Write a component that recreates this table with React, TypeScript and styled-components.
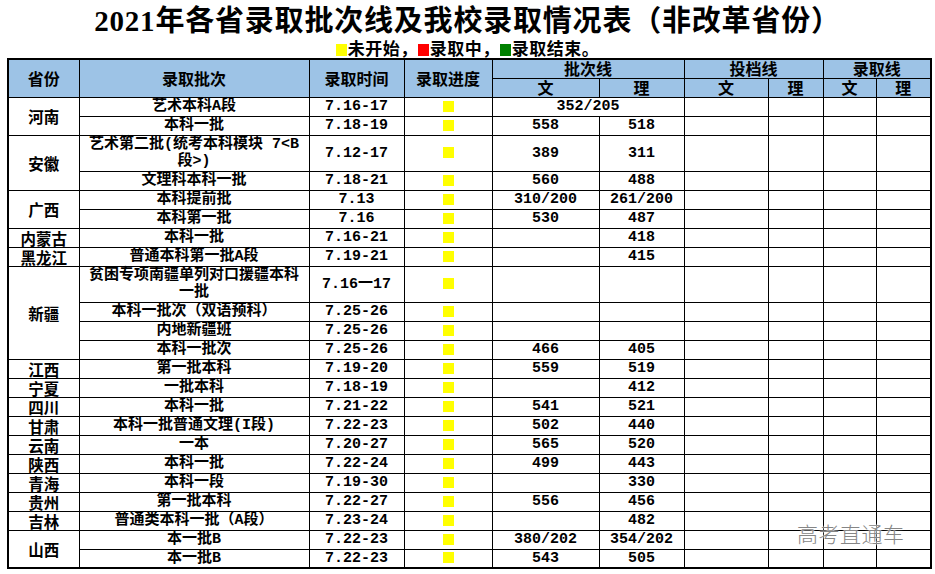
import React from 'react';
import styled, { createGlobalStyle } from 'styled-components';

const GlobalStyle = createGlobalStyle`
  html, body {
    margin: 0;
    padding: 0;
    background: #fff;
  }
  body {
    font-family: "Noto Sans CJK SC", sans-serif;
    color: #000;
  }
`

const Page = styled.div`
  position: relative;
  width: 935px;
  height: 574px;
  overflow: hidden;
  padding-top: 5px;
  box-sizing: border-box;
`

const Title = styled.h1`
  margin: 0;
  text-align: center;
  font-family: "Liberation Serif", "Noto Sans CJK SC", serif;
  font-size: 29px;
  line-height: 33px;
  font-weight: 700;
  letter-spacing: 0.8px;
`

const Legend = styled.div`
  text-align: center;
  font-size: 17px;
  line-height: 19px;
  font-weight: 700;
  letter-spacing: 0.5px;
`

const Swatch = styled.span<{ $color: string }>`
  display: inline-block;
  width: 11px;
  height: 12px;
  margin-right: 1px;
  vertical-align: -1px;
  background: ${p => p.$color};
`

const Table = styled.table`
  margin: 1px 0 0 7px;
  width: 923px;
  table-layout: fixed;
  border-collapse: collapse;
  border: 2px solid #000;
  font-family: "Liberation Mono", "Noto Sans CJK SC", monospace;
  font-size: 15px;
  font-weight: 700;
`

const Row = styled.tr<{ $tall?: boolean }>`
  height: ${p => (p.$tall ? '36px' : '19px')};
`

const HeadCell = styled.th`
  background: #9dc3e6;
  border: 1px solid #000;
  padding: 0;
  font-family: "Noto Sans CJK SC", sans-serif;
  font-size: 16px;
  font-weight: 600;
  line-height: 17px;
  text-align: center;
  vertical-align: middle;
`

const Cell = styled.td`
  border: 1px solid #000;
  padding: 0;
  line-height: 17px;
  text-align: center;
  vertical-align: middle;
  white-space: nowrap;
`

const ProvCell = styled(Cell)`
  font-family: "Noto Sans CJK SC", sans-serif;
  font-size: 15.5px;
  line-height: 16px;
`

const Mark = styled.span`
  display: inline-block;
  width: 11px;
  height: 11px;
  background: #ffff00;
  vertical-align: middle;
`

const Watermark = styled.div`
  position: absolute;
  left: 797px;
  top: 518px;
  font-family: "Noto Sans CJK SC", sans-serif;
  font-size: 21px;
  font-weight: 300;
  color: #858585;
  letter-spacing: 0.5px;
  text-shadow: 0 0 2px #fff, 0 0 2px #fff;
`

type Item = {
  prov?: string;
  span?: number;
  batch: React.ReactNode;
  time: string;
  wen?: string;
  li?: string;
  merged?: string;
  tall?: boolean;
};

const rows: Item[] = [
  { prov: '河南', span: 2, batch: '艺术本科A段', time: '7.16-17', merged: '352/205' },
  { batch: '本科一批', time: '7.18-19', wen: '558', li: '518' },
  { prov: '安徽', span: 2, batch: <>艺术第二批(统考本科模块 7&lt;B<br />段&gt;)</>, time: '7.12-17', wen: '389', li: '311', tall: true },
  { batch: '文理科本科一批', time: '7.18-21', wen: '560', li: '488' },
  { prov: '广西', span: 2, batch: '本科提前批', time: '7.13', wen: '310/200', li: '261/200' },
  { batch: '本科第一批', time: '7.16', wen: '530', li: '487' },
  { prov: '内蒙古', batch: '本科一批', time: '7.16-21', li: '418' },
  { prov: '黑龙江', batch: '普通本科第一批A段', time: '7.19-21', li: '415' },
  { prov: '新疆', span: 4, batch: <>贫困专项南疆单列对口援疆本科<br />一批</>, time: '7.16一17', tall: true },
  { batch: '本科一批次（双语预科）', time: '7.25-26' },
  { batch: '内地新疆班', time: '7.25-26' },
  { batch: '本科一批次', time: '7.25-26', wen: '466', li: '405' },
  { prov: '江西', batch: '第一批本科', time: '7.19-20', wen: '559', li: '519' },
  { prov: '宁夏', batch: '一批本科', time: '7.18-19', li: '412' },
  { prov: '四川', batch: '本科一批', time: '7.21-22', wen: '541', li: '521' },
  { prov: '甘肃', batch: '本科一批普通文理(I段)', time: '7.22-23', wen: '502', li: '440' },
  { prov: '云南', batch: '一本', time: '7.20-27', wen: '565', li: '520' },
  { prov: '陕西', batch: '本科一批', time: '7.22-24', wen: '499', li: '443' },
  { prov: '青海', batch: '本科一段', time: '7.19-30', li: '330' },
  { prov: '贵州', batch: '第一批本科', time: '7.22-27', wen: '556', li: '456' },
  { prov: '吉林', batch: '普通类本科一批（A段）', time: '7.23-24', li: '482' },
  { prov: '山西', span: 2, batch: '本一批B', time: '7.22-23', wen: '380/202', li: '354/202' },
  { batch: '本一批B', time: '7.22-23', wen: '543', li: '505' },
];

const widths = [71, 230, 95, 88, 107, 85, 84, 55, 53, 55];

function App() {
  return (
    <Page>
      <GlobalStyle />
      <Title>2021年各省录取批次线及我校录取情况表（非改革省份）</Title>
      <Legend>
        <Swatch $color="#ffff00" />未开始，<Swatch $color="#ff0000" />录取中，<Swatch $color="#008000" />录取结束。
      </Legend>
      <Table>
        <colgroup>
          {widths.map((w, i) => <col key={i} style={{ width: w }} />)}
        </colgroup>
        <thead>
          <Row>
            <HeadCell rowSpan={2}>省份</HeadCell>
            <HeadCell rowSpan={2}>录取批次</HeadCell>
            <HeadCell rowSpan={2}>录取时间</HeadCell>
            <HeadCell rowSpan={2}>录取进度</HeadCell>
            <HeadCell colSpan={2}>批次线</HeadCell>
            <HeadCell colSpan={2}>投档线</HeadCell>
            <HeadCell colSpan={2}>录取线</HeadCell>
          </Row>
          <Row>
            <HeadCell>文</HeadCell>
            <HeadCell>理</HeadCell>
            <HeadCell>文</HeadCell>
            <HeadCell>理</HeadCell>
            <HeadCell>文</HeadCell>
            <HeadCell>理</HeadCell>
          </Row>
        </thead>
        <tbody>
          {rows.map((r, i) => (
            <Row key={i} $tall={r.tall}>
              {r.prov && <ProvCell rowSpan={r.span || 1}>{r.prov}</ProvCell>}
              <Cell>{r.batch}</Cell>
              <Cell>{r.time}</Cell>
              <Cell><Mark /></Cell>
              {r.merged ? (
                <Cell colSpan={2}>{r.merged}</Cell>
              ) : (
                <>
                  <Cell>{r.wen}</Cell>
                  <Cell>{r.li}</Cell>
                </>
              )}
              <Cell />
              <Cell />
              <Cell />
              <Cell />
            </Row>
          ))}
        </tbody>
      </Table>
      <Watermark>高考直通车</Watermark>
    </Page>
  );
}

export default App;
